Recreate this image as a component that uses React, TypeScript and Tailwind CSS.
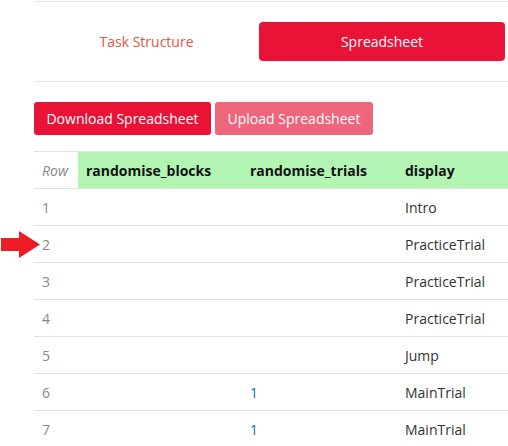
import React from "react";

const rows: [string, string, string, string][] = [
  ["1", "", "", "Intro"],
  ["2", "", "", "PracticeTrial"],
  ["3", "", "", "PracticeTrial"],
  ["4", "", "", "PracticeTrial"],
  ["5", "", "", "Jump"],
  ["6", "", "1", "MainTrial"],
  ["7", "", "1", "MainTrial"],
];

export default function App() {
  return (
    <div
      className="relative w-[508px] h-[446px] overflow-hidden bg-white text-[14px] text-[#333]"
      style={{ fontFamily: '"Open Sans", sans-serif' }}
    >
      <div className="pl-[34px]">
        <div className="mt-px border-t border-[#e8e8e8]" />
        <div className="flex items-center h-[80px] border-b border-[#e8e8e8]">
          <div className="w-[225px] text-center text-[#e8543e]">Task Structure</div>
          <div className="w-[246px] h-[39px] rounded-[4px] bg-[#e81337] text-white flex items-center justify-center">
            Spreadsheet
          </div>
        </div>
        <div className="flex gap-[4px] mt-[20px]">
          <div className="w-[177px] h-[33px] rounded-[3px] bg-[#e81337] text-white flex items-center justify-center">
            Download Spreadsheet
          </div>
          <div className="w-[158px] h-[33px] rounded-[3px] bg-[#ee667b] text-white flex items-center justify-center">
            Upload Spreadsheet
          </div>
        </div>
        <div className="mt-[16px] border-t border-[#e0e0e0]">
          <div className="flex h-[36px] items-center">
            <div className="w-[44px] h-full flex items-center pl-[8px] italic text-[#888]">Row</div>
            <div className="flex-1 h-full flex items-center bg-[#b3f5b3] font-bold text-[#111]">
              <div className="w-[164px] pl-[8px]">randomise_blocks</div>
              <div className="w-[155px] pl-[8px]">randomise_trials</div>
              <div className="pl-[8px]">display</div>
            </div>
          </div>
          {rows.map((r) => (
            <div key={r[0]} className="flex h-[37px] items-center border-t border-[#e0e0e0]">
              <div className="w-[44px] pl-[8px] text-[#888]">{r[0]}</div>
              <div className="w-[164px] pl-[8px]">{r[1]}</div>
              <div className="w-[155px] pl-[8px] text-[#1a6fa0]">{r[2]}</div>
              <div className="pl-[8px] text-[#333]">{r[3]}</div>
            </div>
          ))}
        </div>
      </div>
      <svg className="absolute left-0 top-[229px]" width="42" height="32" viewBox="0 0 42 32">
        <polygon points="1,9 19,9 19,2 40,15.5 19,29 19,22 1,22" fill="#ed1c24" />
      </svg>
    </div>
  );
}
